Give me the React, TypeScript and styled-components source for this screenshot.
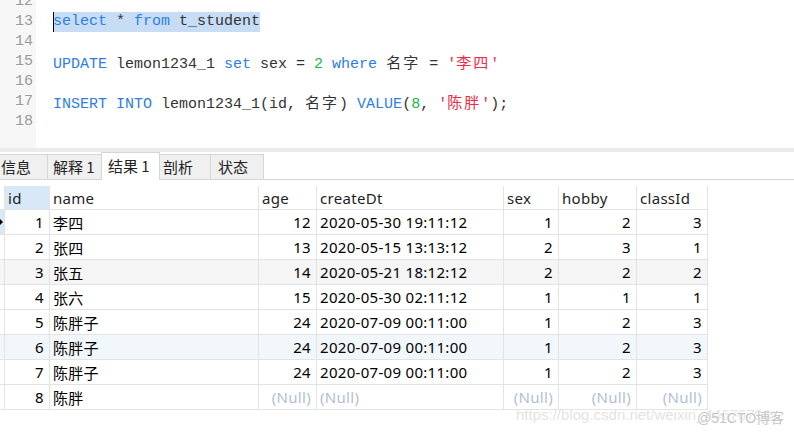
import React from "react";
import styled, { createGlobalStyle } from "styled-components";

const Global = createGlobalStyle`
  html, body { margin: 0; padding: 0; background: #fff; }
  body { overflow: hidden; }
  * { box-sizing: border-box; }
`;

const Page = styled.div`
  position: relative;
  width: 794px;
  height: 434px;
  overflow: hidden;
  background: #fff;
  font-family: "Noto Sans", "Noto Sans CJK SC", sans-serif;
`;

const Editor = styled.div`
  display: flex;
  height: 148px;
  overflow: hidden;
`;

const Gutter = styled.div`
  width: 36px;
  flex: none;
  background: #f7f7f7;
  padding-right: 3px;
  text-align: right;
  color: #9a9a9a;
  font-family: "Liberation Mono", monospace;
  font-size: 15px;
`;

const CodeArea = styled.div`
  flex: 1;
  padding-left: 17px;
  font-family: "Liberation Mono", monospace;
  font-size: 15px;
  color: #333;
  white-space: pre;
`;

const Lines = styled.div`
  margin-top: -8px;
`;

const Line = styled.div`
  height: 20px;
  line-height: 20px;
`;

const Kw = styled.span`
  color: #2f7de4;
`;
const Num = styled.span`
  color: #1fb44a;
`;
const Str = styled.span`
  color: #ef2a48;
`;
const Cjk = styled.span`
  font-family: "Noto Sans CJK SC", sans-serif;
  letter-spacing: 2px;
`;
const Selected = styled.span`
  display: inline-block;
  height: 20px;
  background: #c7ddf6;
  box-shadow: inset 1px 0 0 #000;
`;

const Splitter = styled.div`
  height: 4px;
  background: #ebebeb;
`;

const TabBar = styled.div`
  display: flex;
  align-items: flex-end;
  height: 28px;
  margin-left: -11px;
  border-bottom: 1px solid #d6d6d6;
  font-family: "Noto Sans CJK SC", sans-serif;
`;

const Tab = styled.div<{ $w: number; $pl: number; $active?: boolean }>`
  width: ${(p) => p.$w}px;
  padding-left: ${(p) => p.$pl}px;
  height: ${(p) => (p.$active ? 28 : 25)}px;
  margin-bottom: ${(p) => (p.$active ? -1 : 0)}px;
  margin-right: -1px;
  border: 1px solid #d6d6d6;
  border-bottom: none;
  background: ${(p) => (p.$active ? "#fff" : "#f0f0f0")};
  position: ${(p) => (p.$active ? "relative" : "static")};
  font-size: 15px;
  line-height: ${(p) => (p.$active ? 26 : 23)}px;
  color: #222;
  white-space: nowrap;
`;

const Grid = styled.div`
  margin-top: 6px;
  display: grid;
  grid-template-columns: 5px 45px 209px 58px 187px 55px 78px 71px;
  grid-template-rows: 24px;
  grid-auto-rows: 25px;
  width: 708px;
  font-size: 15px;
  letter-spacing: 0.3px;
`;

const Cell = styled.div<{ $right?: boolean; $bg?: string; $null?: boolean; $head?: boolean }>`
  border-right: 1px solid #e3e3e3;
  border-bottom: 1px solid #e3e3e3;
  background: ${(p) => p.$bg || "transparent"};
  color: ${(p) => (p.$null ? "#b3bfd5" : p.$head ? "#1e1e1e" : "#000")};
  padding: 0 5px 0 3px;
  display: flex;
  align-items: center;
  justify-content: ${(p) => (p.$right ? "flex-end" : "flex-start")};
  white-space: nowrap;
  overflow: hidden;
`;

const Indicator = styled.div<{ $bg?: string }>`
  border-right: 1px solid #e3e3e3;
  border-bottom: 1px solid #e3e3e3;
  background: ${(p) => p.$bg || "transparent"};
  display: flex;
  align-items: center;
`;

const Arrow = styled.div`
  width: 0;
  height: 0;
  border-top: 3px solid transparent;
  border-bottom: 3px solid transparent;
  border-left: 3px solid #000;
`;

const Watermark = styled.div`
  position: absolute;
  left: 516px;
  top: 406px;
  font-family: "Liberation Sans", Arial, sans-serif;
  font-size: 15px;
  color: #e4e4e4;
  white-space: nowrap;
`;

const Stamp = styled.div`
  position: absolute;
  left: 697px;
  top: 407px;
  font-family: "Liberation Sans", "Noto Sans CJK SC", sans-serif;
  font-size: 14px;
  color: #c4c4c4;
  white-space: nowrap;
  text-shadow: 0 0 2px #fff, 0 0 2px #fff;
`;

type Row = {
  id: string;
  name: string;
  age: string | null;
  dt: string | null;
  sex: string | null;
  hobby: string | null;
  cls: string | null;
  bg?: string;
};

const rows: Row[] = [
  { id: "1", name: "李四", age: "12", dt: "2020-05-30 19:11:12", sex: "1", hobby: "2", cls: "3" },
  { id: "2", name: "张四", age: "13", dt: "2020-05-15 13:13:12", sex: "2", hobby: "3", cls: "1" },
  { id: "3", name: "张五", age: "14", dt: "2020-05-21 18:12:12", sex: "2", hobby: "2", cls: "2", bg: "#f5f5f5" },
  { id: "4", name: "张六", age: "15", dt: "2020-05-30 02:11:12", sex: "1", hobby: "1", cls: "1" },
  { id: "5", name: "陈胖子", age: "24", dt: "2020-07-09 00:11:00", sex: "1", hobby: "2", cls: "3" },
  { id: "6", name: "陈胖子", age: "24", dt: "2020-07-09 00:11:00", sex: "1", hobby: "2", cls: "3", bg: "#f2f7fc" },
  { id: "7", name: "陈胖子", age: "24", dt: "2020-07-09 00:11:00", sex: "1", hobby: "2", cls: "3" },
  { id: "8", name: "陈胖", age: null, dt: null, sex: null, hobby: null, cls: null },
];

const headers: { label: string; bg?: string }[] = [
  { label: "id", bg: "#d9e8f7" },
  { label: "name" },
  { label: "age" },
  { label: "createDt" },
  { label: "sex" },
  { label: "hobby" },
  { label: "classId" },
];

const tabs = [
  { label: "信息", w: 59, pl: 11 },
  { label: "解释 1", w: 55, pl: 5 },
  { label: "结果 1", w: 59, pl: 6, active: true },
  { label: "剖析", w: 52, pl: 3 },
  { label: "状态", w: 54, pl: 7 },
];

export default function App() {
  return (
    <Page>
      <Global />
      <Editor>
        <Gutter>
          <Lines>
            {[12, 13, 14, 15, 16, 17, 18].map((n) => (
              <Line key={n}>{n}</Line>
            ))}
          </Lines>
        </Gutter>
        <CodeArea>
          <Lines>
            <Line> </Line>
            <Line>
              <Selected>
                <Kw>select</Kw> * <Kw>from</Kw> t_student
              </Selected>
            </Line>
            <Line> </Line>
            <Line>
              <Kw>UPDATE</Kw> lemon1234_1 <Kw>set</Kw> sex = <Num>2</Num> <Kw>where</Kw> <Cjk>名字</Cjk>{" = "}
              <Str>
                '<Cjk>李四</Cjk>'
              </Str>
            </Line>
            <Line> </Line>
            <Line>
              <Kw>INSERT</Kw> <Kw>INTO</Kw> lemon1234_1(id, <Cjk>名字</Cjk>) <Kw>VALUE</Kw>(<Num>8</Num>,{" "}
              <Str>
                '<Cjk>陈胖</Cjk>'
              </Str>
              );
            </Line>
            <Line> </Line>
          </Lines>
        </CodeArea>
      </Editor>
      <Splitter />
      <TabBar>
        {tabs.map((t) => (
          <Tab key={t.label} $w={t.w} $pl={t.pl} $active={t.active}>
            {t.label}
          </Tab>
        ))}
      </TabBar>
      <Grid>
        <Indicator />
        {headers.map((h) => (
          <Cell key={h.label} $head $bg={h.bg}>
            {h.label}
          </Cell>
        ))}
        {rows.map((r, i) => {
          const vals: [string | null, boolean][] = [
            [r.age, true],
            [r.dt, false],
            [r.sex, true],
            [r.hobby, true],
            [r.cls, true],
          ];
          return (
            <React.Fragment key={r.id}>
              <Indicator $bg={i === 0 ? "#d9e8f7" : r.bg}>{i === 0 && <Arrow />}</Indicator>
              <Cell $right $bg={r.bg}>
                {r.id}
              </Cell>
              <Cell $bg={r.bg}>{r.name}</Cell>
              {vals.map(([v, right], k) => (
                <Cell key={k} $right={v === null ? k !== 1 : right} $null={v === null} $bg={r.bg}>
                  {v === null ? "(Null)" : v}
                </Cell>
              ))}
            </React.Fragment>
          );
        })}
      </Grid>
      <Watermark>https://blog.csdn.net/weixin_44676793</Watermark>
      <Stamp>@51CTO博客</Stamp>
    </Page>
  );
}
